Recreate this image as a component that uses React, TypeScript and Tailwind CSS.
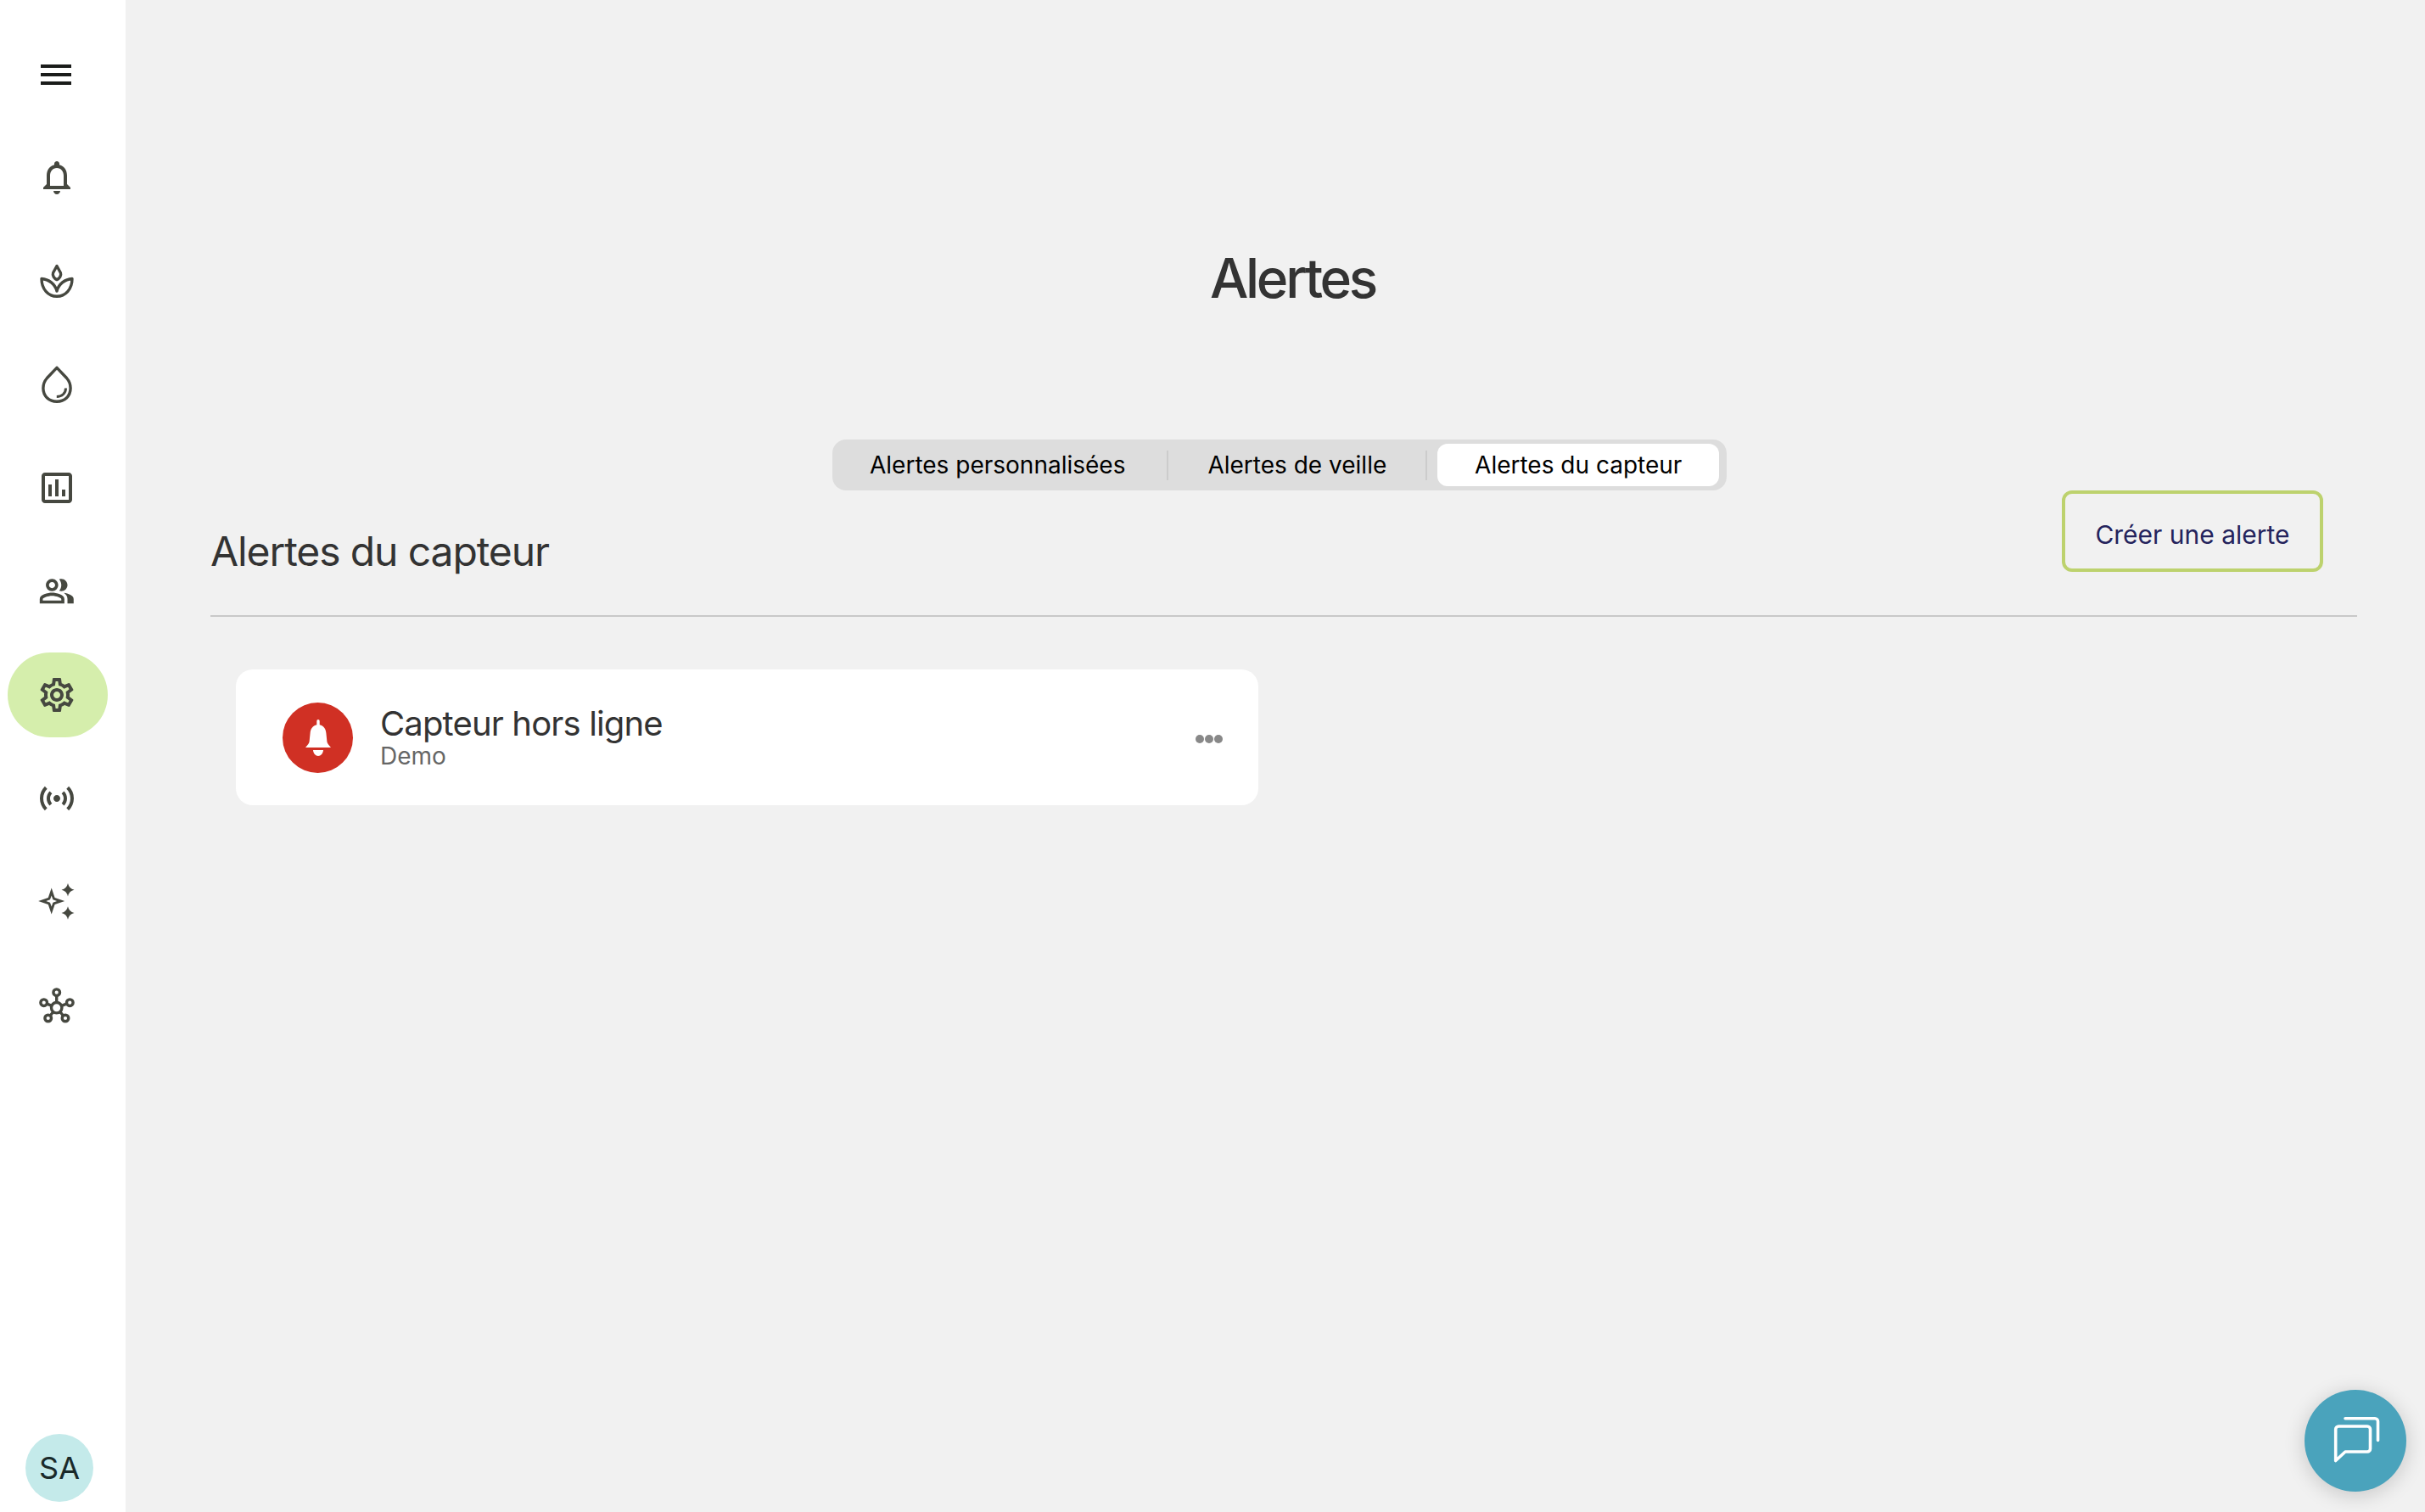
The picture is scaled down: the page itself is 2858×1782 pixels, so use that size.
import React from "react";

const C = "#464840";

function Mat({ d, size = 48 }: { d: string; size?: number }) {
  return (
    <svg width={size} height={size} viewBox="0 0 24 24" fill={C}>
      <path d={d} />
    </svg>
  );
}

const bell = "M12 22c1.1 0 2-.9 2-2h-4c0 1.1.9 2 2 2m6-6v-5c0-3.07-1.63-5.64-4.5-6.32V4c0-.83-.67-1.5-1.5-1.5s-1.5.67-1.5 1.5v.68C7.64 5.36 6 7.92 6 11v5l-2 2v1h16v-1zm-2 1H8v-6c0-2.48 1.51-4.5 4-4.5s4 2.02 4 4.5z";
const chart = "M19 3H5c-1.1 0-2 .9-2 2v14c0 1.1.9 2 2 2h14c1.1 0 2-.9 2-2V5c0-1.1-.9-2-2-2m0 16H5V5h14zM7 10h2v7H7zm4-3h2v10h-2zm4 6h2v4h-2z";
const people = "M16.67 13.13C18.04 14.06 19 15.32 19 17v3h4v-3c0-2.18-3.57-3.47-6.33-3.87M15 12c2.21 0 4-1.79 4-4s-1.79-4-4-4c-.47 0-.91.1-1.33.24C14.5 5.27 15 6.58 15 8s-.5 2.73-1.33 3.76c.42.14.86.24 1.33.24M9 12c2.21 0 4-1.79 4-4s-1.79-4-4-4-4 1.79-4 4 1.79 4 4 4m0-6c1.1 0 2 .9 2 2s-.9 2-2 2-2-.9-2-2 .9-2 2-2m0 7c-2.67 0-8 1.34-8 4v3h16v-3c0-2.66-5.33-4-8-4m6 5H3v-.99C3.2 16.29 6.3 15 9 15s5.8 1.29 6 2v1z";
const gear = "M19.43 12.98c.04-.32.07-.64.07-.98 0-.34-.03-.66-.07-.98l2.11-1.65c.19-.15.24-.42.12-.64l-2-3.46c-.09-.16-.26-.25-.44-.25-.06 0-.12.01-.17.03l-2.49 1c-.52-.4-1.08-.73-1.69-.98l-.38-2.65C14.46 2.18 14.25 2 14 2h-4c-.25 0-.46.18-.49.42l-.38 2.65c-.61.25-1.17.59-1.69.98l-2.49-1c-.06-.02-.12-.03-.18-.03-.17 0-.34.09-.43.25l-2 3.46c-.13.22-.07.49.12.64l2.11 1.65c-.04.32-.07.65-.07.98 0 .33.03.66.07.98l-2.11 1.65c-.19.15-.24.42-.12.64l2 3.46c.09.16.26.25.44.25.06 0 .12-.01.17-.03l2.49-1c.52.4 1.08.73 1.69.98l.38 2.65c.03.24.24.42.49.42h4c.25 0 .46-.18.49-.42l.38-2.65c.61-.25 1.17-.59 1.69-.98l2.49 1c.06.02.12.03.18.03.17 0 .34-.09.43-.25l2-3.46c.12-.22.07-.49-.12-.64zm-1.98-1.71c.04.31.05.52.05.73 0 .21-.02.43-.05.73l-.14 1.13.89.7 1.08.84-.7 1.21-1.27-.51-1.04-.42-.9.68c-.43.32-.84.56-1.25.73l-1.06.43-.16 1.13-.2 1.35h-1.4l-.19-1.35-.16-1.13-1.06-.43c-.43-.18-.83-.41-1.23-.71l-.91-.7-1.06.43-1.27.51-.7-1.21 1.08-.84.89-.7-.14-1.13c-.03-.31-.05-.54-.05-.74s.02-.43.05-.73l.14-1.13-.89-.7-1.08-.84.7-1.21 1.27.51 1.04.42.9-.68c.43-.32.84-.56 1.25-.73l1.06-.43.16-1.13.2-1.35h1.39l.19 1.35.16 1.13 1.06.43c.43.18.83.41 1.23.71l.91.7 1.06-.43 1.27-.51.7 1.21-1.07.85-.89.7zM12 8c-2.21 0-4 1.79-4 4s1.79 4 4 4 4-1.79 4-4-1.79-4-4-4m0 6c-1.1 0-2-.9-2-2s.9-2 2-2 2 .9 2 2-.9 2-2 2";
const sensors = "M7.76 16.24C6.67 15.16 6 13.66 6 12s.67-3.16 1.76-4.24l1.42 1.42C8.45 9.9 8 10.9 8 12c0 1.1.45 2.1 1.17 2.83zm8.48 0C17.33 15.16 18 13.66 18 12s-.67-3.16-1.76-4.24l-1.42 1.42C15.55 9.9 16 10.9 16 12c0 1.1-.45 2.1-1.17 2.83zM12 10c-1.1 0-2 .9-2 2s.9 2 2 2 2-.9 2-2-.9-2-2-2m8 2c0 2.21-.9 4.21-2.35 5.65l1.42 1.42C20.88 17.26 22 14.76 22 12s-1.12-5.26-2.93-7.07l-1.42 1.42C19.1 7.79 20 9.79 20 12M6.35 6.35 4.93 4.93C3.12 6.74 2 9.24 2 12s1.12 5.26 2.93 7.07l1.42-1.42C4.9 16.21 4 14.21 4 12s.9-4.21 2.35-5.65";

function Plant() {
  return (
    <svg width="40" height="40" viewBox="0 0 40 40" fill="none" stroke={C} strokeWidth="3.4" strokeLinejoin="round">
      <path d="M20 2.5 L15.6 10.5 C14.4 13.8 17 17.2 20 18.6 C23 17.2 25.6 13.8 24.4 10.5 Z" />
      <path d="M2 17.5 C10.5 18 18 24 20 32 C22 24 29.5 18 38 17.5 C38 30 30 38.3 20 38.3 C10 38.3 2 30 2 17.5 Z" />
    </svg>
  );
}

function Drop() {
  return (
    <svg width="36" height="44" viewBox="0 0 36 44" fill="none" stroke={C} strokeWidth="3.4" strokeLinecap="butt">
      <path d="M18 2.4 L6.5 14.5 C3.5 18 1.9 22 1.9 26.5 C1.9 36 9 42.2 18 42.2 C27 42.2 34.1 36 34.1 26.5 C34.1 22 32.5 18 29.5 14.5 Z" strokeLinejoin="round" />
      <path d="M17.8 36.5 C24 36.5 28.5 32.5 28.5 26.5" strokeWidth="3" />
    </svg>
  );
}

function Sparkles() {
  return (
    <svg width="44" height="44" viewBox="0 0 44 44" fill={C}>
      <path
        fillRule="evenodd"
        d="M15.7 5.5 L19.6 17.1 L31.2 21 L19.6 24.9 L15.7 36.5 L11.8 24.9 L0.2 21 L11.8 17.1 Z M15.7 14.6 L14 19.3 L9.3 21 L14 22.7 L15.7 27.4 L17.4 22.7 L22.1 21 L17.4 19.3 Z"
      />
      <path d="M35 0 Q36.4 6.3 42.5 7.7 Q36.4 9.1 35 15.4 Q33.6 9.1 27.5 7.7 Q33.6 6.3 35 0 Z" />
      <path d="M35 27.3 Q36.4 33.6 42.5 35 Q36.4 36.4 35 42.7 Q33.6 36.4 27.5 35 Q33.6 33.6 35 27.3 Z" />
    </svg>
  );
}

function Molecule() {
  const sats: [number, number][] = [[21.7, 5.7], [6.7, 17.7], [37.3, 17.7], [11.7, 36], [32, 36]];
  return (
    <svg className="mt-[2px]" width="44" height="44" viewBox="0 0 44 44" fill="none" stroke={C} strokeWidth="3.4">
      {sats.map(([x, y], i) => (
        <line key={i} x1="21.7" y1="23.7" x2={x} y2={y} />
      ))}
      <circle cx="21.7" cy="23.7" r="6.2" fill="#fff" />
      {sats.map(([x, y], i) => (
        <circle key={i} cx={x} cy={y} r="3.8" fill="#fff" />
      ))}
    </svg>
  );
}

function NavItem({ children, active }: { children: React.ReactNode; active?: boolean }) {
  return (
    <div className={`w-[118px] h-[100px] mb-[22px] pr-[2px] rounded-[50px] flex items-center justify-center ${active ? "bg-[#d5eeac]" : ""}`}>
      {children}
    </div>
  );
}

export default function App() {
  return (
    <div className="flex w-[2858px] h-[1782px] overflow-hidden bg-[#f1f1f1] text-[#333333] font-['Inter',sans-serif]">
      <aside className="w-[148px] h-full bg-white flex flex-col items-start pl-[9px] shrink-0">
        <div className="flex flex-col gap-[6px] w-[36px] mt-[76px] mb-[59px] ml-[39px]">
          <div className="h-[4px] bg-[#1a1c1a]" />
          <div className="h-[4px] bg-[#1a1c1a]" />
          <div className="h-[4px] bg-[#1a1c1a]" />
        </div>
        <NavItem><Mat d={bell} /></NavItem>
        <NavItem><Plant /></NavItem>
        <NavItem><Drop /></NavItem>
        <NavItem><Mat d={chart} /></NavItem>
        <NavItem><Mat d={people} size={43.6} /></NavItem>
        <NavItem active><Mat d={gear} /></NavItem>
        <NavItem><Mat d={sensors} /></NavItem>
        <NavItem><Sparkles /></NavItem>
        <NavItem><Molecule /></NavItem>
        <div className="mt-auto mb-[12px] ml-[21px] w-[80px] h-[80px] rounded-full bg-[#c4eaea] text-[#1a2a2a] text-[36px] flex items-center justify-center">
          SA
        </div>
      </aside>

      <main className="relative flex-1 flex flex-col">
        <h1 className="mt-[288px] h-[80px] pl-[41px] text-center text-[64px] leading-[80px] font-medium tracking-[-3.3px] text-[#333333]">
          Alertes
        </h1>
        <div className="mt-[150px] ml-[833px] w-[1054px] h-[60px] bg-[#dddddd] rounded-[16px] p-[5px] flex items-center text-[28px] text-black whitespace-nowrap">
          <div className="pl-[39px] pr-[49px] flex items-center h-[50px]">Alertes personnalisées</div>
          <div className="w-[2px] h-[35px] bg-[#cccccc]" />
          <div className="pl-[46px] pr-[46px] flex items-center h-[50px]">Alertes de veille</div>
          <div className="w-[2px] h-[35px] bg-[#cccccc]" />
          <div className="ml-[12px] w-[332px] h-[50px] bg-white rounded-[12px] flex items-center justify-center">Alertes du capteur</div>
        </div>

        <div className="ml-[100px] mr-[80px] h-[149px] border-b-2 border-[#c8c8c8] flex justify-between items-start">
          <h2 className="mt-[44px] text-[48px] leading-[56px] font-normal tracking-[-1.1px]">Alertes du capteur</h2>
          <button className="mr-[40px] w-[308px] h-[96px] pt-[8px] border-[4px] border-[#bdd26e] rounded-[12px] text-[30px] text-[#24235c] flex items-center justify-center">
            Créer une alerte
          </button>
        </div>

        <div className="mt-[62px] ml-[130px] w-[1205px] h-[160px] bg-white rounded-[20px] flex items-center pl-[55px] pr-[42px]">
          <div className="w-[83px] h-[83px] rounded-full bg-[#d03024] flex items-center justify-center shrink-0">
            <svg width="30" height="43" viewBox="0 0 30 43" fill="#fff">
              <path d="M13.3 1.7 a1.7 1.7 0 0 1 3.4 0 V6.2 C21.5 7.2 24 11 24.4 16 L25.4 26 C25.7 28 27 29.7 30 33 H0 C3 29.7 4.3 28 4.6 26 L5.6 16 C6 11 8.5 7.2 13.3 6.2 Z" />
              <path d="M9 36 H21 C20.8 40 18 43 15 43 C12 43 9.2 40 9 36 Z" />
            </svg>
          </div>
          <div className="ml-[32px] flex flex-col flex-1 -mt-[1px]">
            <div className="text-[40px] leading-[46px] tracking-[-0.85px] text-[#333333]">Capteur hors ligne</div>
            <div className="text-[28px] leading-[31px] text-[#666666]">Demo</div>
          </div>
          <div className="flex gap-[1px] mt-[4px]">
            <div className="w-[10px] h-[10px] rounded-full bg-[#888888]" />
            <div className="w-[10px] h-[10px] rounded-full bg-[#888888]" />
            <div className="w-[10px] h-[10px] rounded-full bg-[#888888]" />
          </div>
        </div>

        <button className="absolute right-[22px] bottom-[24px] w-[120px] h-[120px] rounded-full bg-[#4aa3bc] shadow-[0_4px_24px_rgba(0,0,0,0.18)] flex items-center justify-center">
          <svg width="64" height="64" viewBox="0 0 64 64" fill="none" stroke="#fff" strokeWidth="3.6" strokeLinecap="round" strokeLinejoin="round">
            <path d="M20 5.8 H55 a3.5 3.5 0 0 1 3.5 3.5 V31.5" />
            <path d="M8.7 55.5 V18.5 a3.5 3.5 0 0 1 3.5 -3.5 H46 a3.5 3.5 0 0 1 3.5 3.5 V41.5 a3.5 3.5 0 0 1 -3.5 3.5 H20 Z" />
          </svg>
        </button>
      </main>
    </div>
  );
}
